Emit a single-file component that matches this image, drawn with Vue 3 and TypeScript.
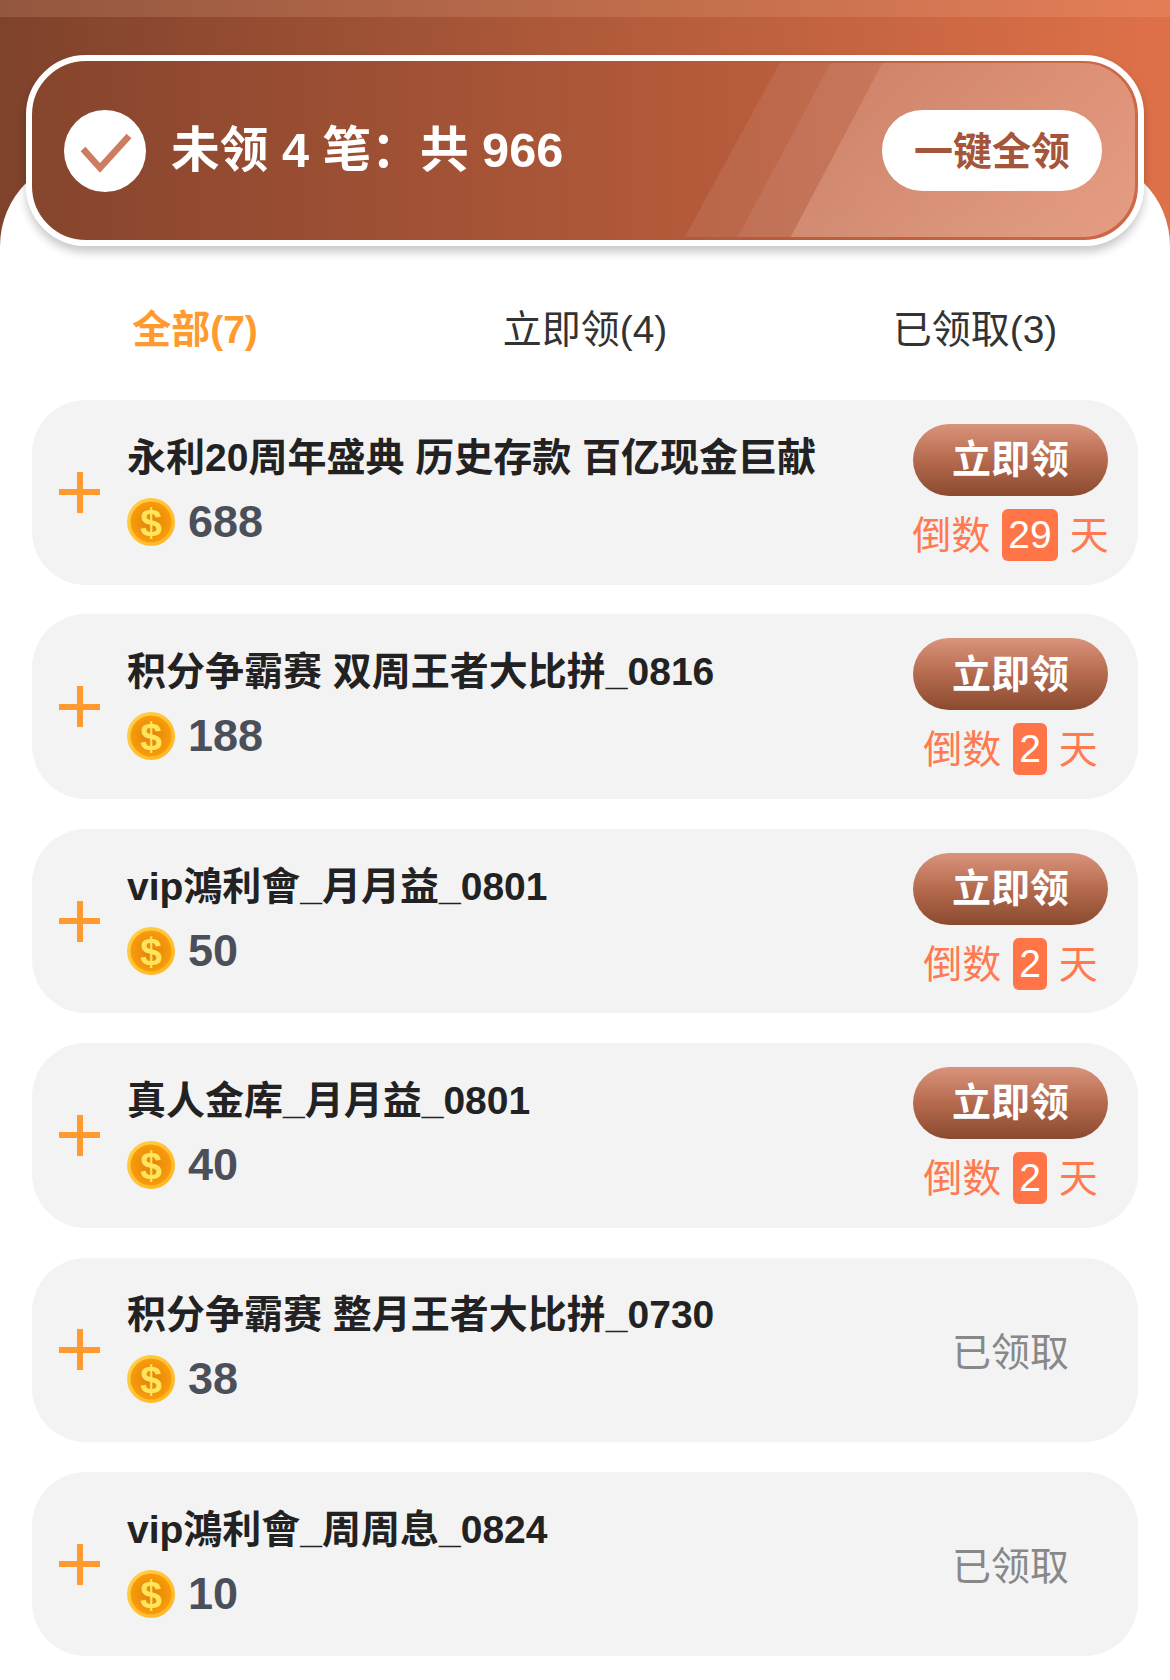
<template>
  <div class="page">
    <header class="hero">
      <div class="summary">
        <svg class="stripes" viewBox="0 0 1105 174" preserveAspectRatio="none" aria-hidden="true">
          <defs>
            <linearGradient id="sheen" x1="0" y1="0" x2="1" y2="1">
              <stop offset="0" stop-color="#ffd9c6" stop-opacity="0.12" />
              <stop offset="1" stop-color="#ffd9c6" stop-opacity="0.36" />
            </linearGradient>
          </defs>
          <polygon points="654,174 749,0 1105,0 1105,174" fill="#fff" fill-opacity="0.08" />
          <polygon points="707,174 800,0 1105,0 1105,174" fill="#fff" fill-opacity="0.07" />
          <polygon points="760,174 852,0 1105,0 1105,174" fill="url(#sheen)" />
        </svg>
        <div class="summary-left">
          <span class="check">
            <svg viewBox="0 0 82 82" width="82" height="82" aria-hidden="true">
              <path d="M19 39 L36 58 L65 26" fill="none" stroke="#cc7d60" stroke-width="6.5" />
            </svg>
          </span>
          <span class="summary-text">未领 4 笔：共 966</span>
        </div>
        <button class="claim-all">一键全领</button>
      </div>
    </header>

    <nav class="tabs">
      <span
        v-for="(tab, i) in tabs"
        :key="tab"
        class="tab"
        :class="{ active: i === 0 }"
      >{{ tab }}</span>
    </nav>

    <section class="list">
      <article v-for="item in items" :key="item.title" class="card">
        <span class="plus"></span>
        <div class="info">
          <div class="title">{{ item.title }}</div>
          <div class="amount">
            <svg class="coin" viewBox="0 0 48 48" width="48" height="48" aria-hidden="true">
              <defs>
                <linearGradient id="rim" x1="0" y1="0" x2="1" y2="1">
                  <stop offset="0" stop-color="#ffd24a" />
                  <stop offset="1" stop-color="#ffb41e" />
                </linearGradient>
                <radialGradient id="face" cx="0.5" cy="0.5" r="0.5">
                  <stop offset="0" stop-color="#e2800e" />
                  <stop offset="1" stop-color="#f89c0a" />
                </radialGradient>
              </defs>
              <circle cx="24" cy="24" r="24" fill="url(#rim)" />
              <circle cx="24" cy="24" r="20.5" fill="url(#face)" />
              <text x="24" y="38" text-anchor="middle" class="coin-mark">$</text>
            </svg>
            <span class="value">{{ item.amount }}</span>
          </div>
        </div>
        <div class="action">
          <template v-if="item.days !== null">
            <button class="claim">立即领</button>
            <div class="countdown">
              <span class="word">倒数</span>
              <span class="days">{{ item.days }}</span>
              <span class="word">天</span>
            </div>
          </template>
          <span v-else class="claimed">已领取</span>
        </div>
      </article>
    </section>
  </div>
</template>

<script setup lang="ts">
interface Reward {
  title: string;
  amount: number;
  days: number | null;
}

const tabs = ['全部(7)', '立即领(4)', '已领取(3)'];

const items: Reward[] = [
  { title: '永利20周年盛典 历史存款 百亿现金巨献', amount: 688, days: 29 },
  { title: '积分争霸赛 双周王者大比拼_0816', amount: 188, days: 2 },
  { title: 'vip鴻利會_月月益_0801', amount: 50, days: 2 },
  { title: '真人金库_月月益_0801', amount: 40, days: 2 },
  { title: '积分争霸赛 整月王者大比拼_0730', amount: 38, days: null },
  { title: 'vip鴻利會_周周息_0824', amount: 10, days: null },
];
</script>

<style>
html,
body {
  margin: 0;
  background: #fff;
}
</style>

<style scoped>
.page {
  width: 1170px;
  height: 1680px;
  overflow: hidden;
  background: #fff;
  font-family: 'Liberation Sans', 'Noto Sans CJK SC', sans-serif;
}

.hero {
  position: relative;
  height: 246px;
  padding: 55px 26px 0;
  box-sizing: border-box;
  background: linear-gradient(90deg, #7f422b 0%, #b05a3a 50%, #df7149 100%);
}

/* status bar tint */
.hero::before {
  content: '';
  position: absolute;
  top: 0;
  left: 0;
  right: 0;
  height: 17px;
  background: rgba(255, 200, 165, 0.16);
}

/* white sheet coming up behind the banner */
.hero::after {
  content: '';
  position: absolute;
  top: 157px;
  left: 0;
  right: 0;
  height: 89px;
  border-radius: 89px 89px 0 0;
  background: #fff;
}

.summary {
  position: relative;
  z-index: 1;
  height: 191px;
  box-sizing: border-box;
  padding: 0 36px 0 32px;
  display: flex;
  align-items: center;
  justify-content: space-between;
  border: 6px solid #fff;
  border-radius: 60px;
  overflow: hidden;
  background: linear-gradient(90deg, #86452d 0%, #b45a3a 60%, #cf6846 100%);
  box-shadow: 0 6px 10px rgba(0, 0, 0, 0.22);
}

.stripes {
  position: absolute;
  top: 2px;
  left: 0;
  width: calc(100% - 3px);
  height: 174px;
  border-radius: 52px;
}

.summary-left {
  position: relative;
  display: flex;
  align-items: center;
  gap: 25px;
}

.check {
  width: 82px;
  height: 82px;
  border-radius: 50%;
  background: #fff;
  display: flex;
}

.summary-text {
  padding-bottom: 10px;
  font-size: 48.7px;
  font-weight: 700;
  color: #fff;
}

.claim-all {
  position: relative;
  width: 220px;
  height: 81px;
  border: 0;
  border-radius: 41px;
  padding: 0 0 6px;
  background: #fff;
  color: #a5553a;
  font-family: inherit;
  font-size: 39px;
  font-weight: 700;
}

.tabs {
  display: grid;
  grid-template-columns: repeat(3, 1fr);
  margin-top: 50px;
  height: 60px;
  align-items: center;
  text-align: center;
  font-size: 39px;
  color: #333;
}

.tab.active {
  color: #ff9a2e;
  font-weight: 700;
}

.list {
  margin-top: 44px;
  padding: 0 32px;
  display: flex;
  flex-direction: column;
  gap: 29.9px;
}

.card {
  height: 184.5px;
  box-sizing: border-box;
  padding: 0 30px 0 27px;
  display: flex;
  align-items: center;
  border-radius: 54px;
  background: #f3f3f3;
}

.plus {
  position: relative;
  flex: none;
  width: 41px;
  height: 41px;
  margin-right: 27px;
  background:
    linear-gradient(#ff9a2e, #ff9a2e) center / 100% 6px no-repeat,
    linear-gradient(#ff9a2e, #ff9a2e) center / 6px 100% no-repeat;
}

.info {
  flex: 1;
  min-width: 0;
}

.title {
  height: 52px;
  line-height: 52px;
  margin-top: -7px;
  font-size: 39px;
  font-weight: 700;
  color: #222;
  white-space: nowrap;
}

.amount {
  margin-top: 14px;
  display: flex;
  align-items: center;
  gap: 13px;
}

.coin {
  flex: none;
}

.coin-mark {
  font-family: 'Liberation Sans', sans-serif;
  font-size: 39px;
  font-weight: 700;
  fill: #ffe45c;
}

.value {
  font-size: 45px;
  line-height: 48px;
  font-weight: 700;
  color: #4b4f5a;
}

.action {
  flex: none;
  width: 195px;
  display: flex;
  flex-direction: column;
  align-items: center;
}

.claim {
  width: 195px;
  height: 72px;
  border: 0;
  border-radius: 36px;
  padding: 0 0 7px;
  background: linear-gradient(180deg, #d9947c 0%, #b56a4d 50%, #8a4a30 100%);
  color: #fff;
  font-family: inherit;
  font-size: 39px;
  font-weight: 700;
}

.countdown {
  margin-top: 13px;
  height: 52px;
  display: flex;
  align-items: center;
  gap: 12px;
  font-size: 39px;
  color: #ff7a50;
  white-space: nowrap;
}

.word {
  padding-bottom: 6px;
}

.days {
  height: 52px;
  line-height: 52px;
  padding: 0 6px;
  border-radius: 6px;
  background: #ff7548;
  color: #fff;
}

.claimed {
  padding-bottom: 2px;
  font-size: 39px;
  color: #888;
}
</style>
